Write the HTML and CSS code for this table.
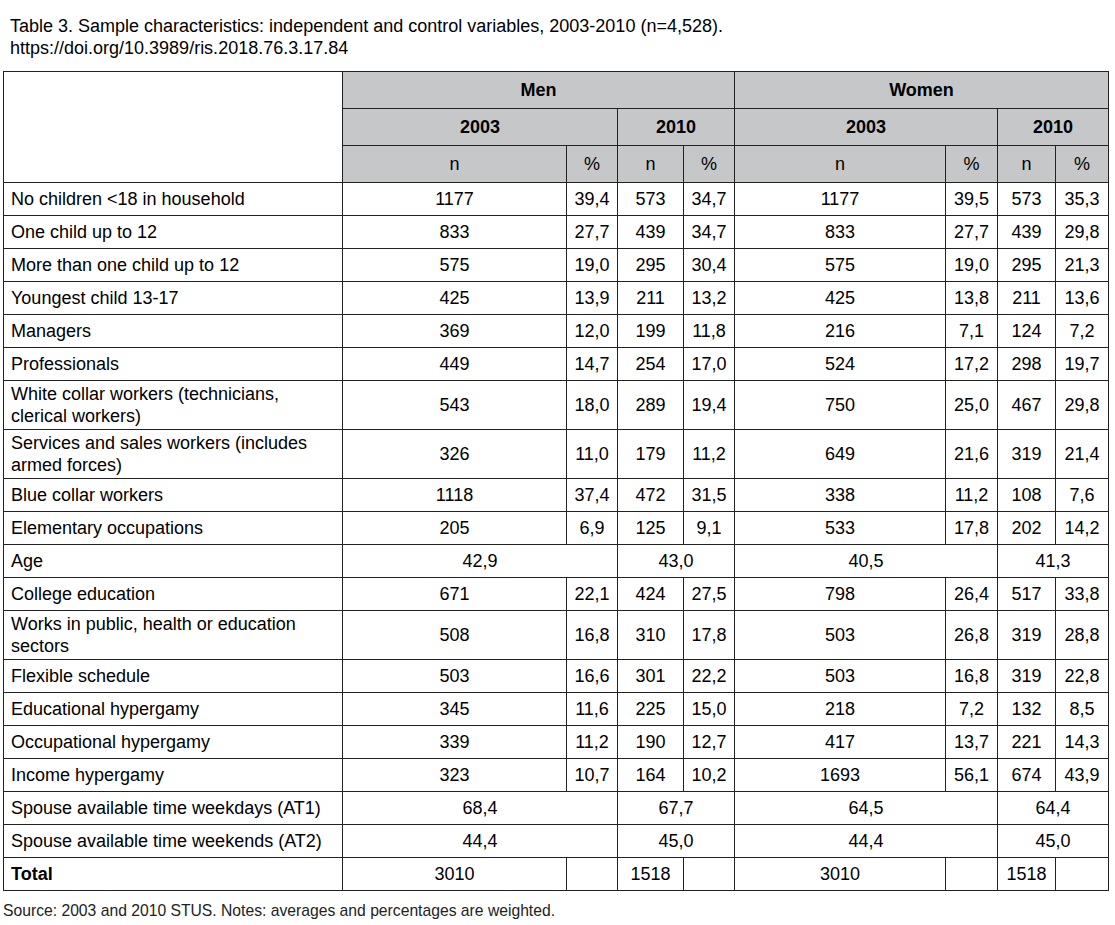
FILE: index.html
```html
<!DOCTYPE html>
<html lang="en">
<head>
<meta charset="utf-8">
<title>Table 3</title>
<link rel="stylesheet" href="styles.css">
</head>
<body>
<div class="caption">Table 3. Sample characteristics: independent and control variables, 2003-2010 (n=4,528).<br>https://doi.org/10.3989/ris.2018.76.3.17.84</div>
<table class="data">
<colgroup>
<col class="c-label"><col class="c-mn03"><col class="c-mp03"><col class="c-mn10"><col class="c-mp10"><col class="c-wn03"><col class="c-wp03"><col class="c-wn10"><col class="c-wp10">
</colgroup>
<thead>
<tr><th class="blank" rowspan="3"></th><th colspan="4">Men</th><th colspan="4">Women</th></tr>
<tr><th colspan="2">2003</th><th colspan="2">2010</th><th colspan="2">2003</th><th colspan="2">2010</th></tr>
<tr class="sub"><th>n</th><th>%</th><th>n</th><th>%</th><th>n</th><th>%</th><th>n</th><th>%</th></tr>
</thead>
<tbody>
<tr><td class="label">No children &lt;18 in household</td><td class="num">1177</td><td class="num">39,4</td><td class="num">573</td><td class="num">34,7</td><td class="num">1177</td><td class="num">39,5</td><td class="num">573</td><td class="num">35,3</td></tr>
<tr><td class="label">One child up to 12</td><td class="num">833</td><td class="num">27,7</td><td class="num">439</td><td class="num">34,7</td><td class="num">833</td><td class="num">27,7</td><td class="num">439</td><td class="num">29,8</td></tr>
<tr><td class="label">More than one child up to 12</td><td class="num">575</td><td class="num">19,0</td><td class="num">295</td><td class="num">30,4</td><td class="num">575</td><td class="num">19,0</td><td class="num">295</td><td class="num">21,3</td></tr>
<tr><td class="label">Youngest child 13-17</td><td class="num">425</td><td class="num">13,9</td><td class="num">211</td><td class="num">13,2</td><td class="num">425</td><td class="num">13,8</td><td class="num">211</td><td class="num">13,6</td></tr>
<tr><td class="label">Managers</td><td class="num">369</td><td class="num">12,0</td><td class="num">199</td><td class="num">11,8</td><td class="num">216</td><td class="num">7,1</td><td class="num">124</td><td class="num">7,2</td></tr>
<tr><td class="label">Professionals</td><td class="num">449</td><td class="num">14,7</td><td class="num">254</td><td class="num">17,0</td><td class="num">524</td><td class="num">17,2</td><td class="num">298</td><td class="num">19,7</td></tr>
<tr><td class="label">White collar workers (technicians, clerical workers)</td><td class="num">543</td><td class="num">18,0</td><td class="num">289</td><td class="num">19,4</td><td class="num">750</td><td class="num">25,0</td><td class="num">467</td><td class="num">29,8</td></tr>
<tr><td class="label">Services and sales workers (includes armed forces)</td><td class="num">326</td><td class="num">11,0</td><td class="num">179</td><td class="num">11,2</td><td class="num">649</td><td class="num">21,6</td><td class="num">319</td><td class="num">21,4</td></tr>
<tr><td class="label">Blue collar workers</td><td class="num">1118</td><td class="num">37,4</td><td class="num">472</td><td class="num">31,5</td><td class="num">338</td><td class="num">11,2</td><td class="num">108</td><td class="num">7,6</td></tr>
<tr><td class="label">Elementary occupations</td><td class="num">205</td><td class="num">6,9</td><td class="num">125</td><td class="num">9,1</td><td class="num">533</td><td class="num">17,8</td><td class="num">202</td><td class="num">14,2</td></tr>
<tr><td class="label">Age</td><td class="num" colspan="2">42,9</td><td class="num" colspan="2">43,0</td><td class="num" colspan="2">40,5</td><td class="num" colspan="2">41,3</td></tr>
<tr><td class="label">College education</td><td class="num">671</td><td class="num">22,1</td><td class="num">424</td><td class="num">27,5</td><td class="num">798</td><td class="num">26,4</td><td class="num">517</td><td class="num">33,8</td></tr>
<tr><td class="label">Works in public, health or education sectors</td><td class="num">508</td><td class="num">16,8</td><td class="num">310</td><td class="num">17,8</td><td class="num">503</td><td class="num">26,8</td><td class="num">319</td><td class="num">28,8</td></tr>
<tr><td class="label">Flexible schedule</td><td class="num">503</td><td class="num">16,6</td><td class="num">301</td><td class="num">22,2</td><td class="num">503</td><td class="num">16,8</td><td class="num">319</td><td class="num">22,8</td></tr>
<tr><td class="label">Educational hypergamy</td><td class="num">345</td><td class="num">11,6</td><td class="num">225</td><td class="num">15,0</td><td class="num">218</td><td class="num">7,2</td><td class="num">132</td><td class="num">8,5</td></tr>
<tr><td class="label">Occupational hypergamy</td><td class="num">339</td><td class="num">11,2</td><td class="num">190</td><td class="num">12,7</td><td class="num">417</td><td class="num">13,7</td><td class="num">221</td><td class="num">14,3</td></tr>
<tr><td class="label">Income hypergamy</td><td class="num">323</td><td class="num">10,7</td><td class="num">164</td><td class="num">10,2</td><td class="num">1693</td><td class="num">56,1</td><td class="num">674</td><td class="num">43,9</td></tr>
<tr><td class="label">Spouse available time weekdays (AT1)</td><td class="num" colspan="2">68,4</td><td class="num" colspan="2">67,7</td><td class="num" colspan="2">64,5</td><td class="num" colspan="2">64,4</td></tr>
<tr><td class="label">Spouse available time weekends (AT2)</td><td class="num" colspan="2">44,4</td><td class="num" colspan="2">45,0</td><td class="num" colspan="2">44,4</td><td class="num" colspan="2">45,0</td></tr>
<tr class="total"><td class="label">Total</td><td class="num">3010</td><td class="num"></td><td class="num">1518</td><td class="num"></td><td class="num">3010</td><td class="num"></td><td class="num">1518</td><td class="num"></td></tr>
</tbody>
</table>
<div class="source">Source: 2003 and 2010 STUS. Notes: averages and percentages are weighted.</div>
</body>
</html>
```

FILE: styles.css
```css
body {
  margin: 0;
  background: #fff;
  color: #000;
  font-family: "Liberation Sans", Arial, sans-serif;
}

.caption {
  margin: 15px 0 0 10px;
  font-size: 18px;
  line-height: 22px;
}

.data {
  margin: 12px 0 0 3px;
  width: 1105px;
  border-collapse: collapse;
  table-layout: fixed;
  font-size: 18px;
}

.c-label { width: 339px; }
.c-mn03 { width: 224px; }
.c-mp03 { width: 51px; }
.c-mn10 { width: 66px; }
.c-mp10 { width: 51px; }
.c-wn03 { width: 211px; }
.c-wp03 { width: 52px; }
.c-wn10 { width: 58px; }
.c-wp10 { width: 53px; }

.data th,
.data td {
  border: 1px solid #222;
  padding: 2px 7px;
  line-height: 22px;
  height: 28px;
  vertical-align: middle;
}

.data th {
  background: #c6c7c8;
  font-weight: bold;
  text-align: center;
  height: 32px;
  padding: 2px 0;
}

.data .sub th {
  font-weight: normal;
}

.data th.blank {
  background: #fff;
}

.data td.num {
  text-align: center;
  padding: 2px 0;
}

.data td.label {
  text-align: left;
}

.total td.label {
  font-weight: bold;
}

.source {
  margin: 10px 0 0 3px;
  font-size: 15.7px;
  line-height: 20px;
  color: #222;
}
```
